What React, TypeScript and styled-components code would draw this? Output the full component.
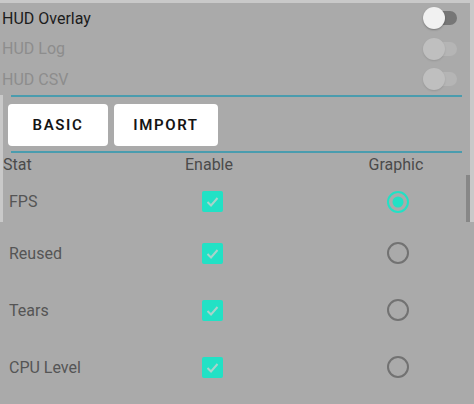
import React from "react";
import styled, { createGlobalStyle } from "styled-components";

const GlobalStyle = createGlobalStyle`
  html, body {
    margin: 0;
    padding: 0;
  }
  body {
    background: #aaaaaa;
    font-family: Roboto, "Noto Sans", sans-serif;
  }
`;

const Screen = styled.div`
  width: 474px;
  height: 404px;
  overflow: hidden;
  background: #aaaaaa;
`;

// the part of the dialog that is still framed by the lighter backdrop
const Sheet = styled.div`
  position: relative;
  height: 222px;
  box-sizing: border-box;
  border-top: 3px solid #c9c9c9;
  border-right: 4px solid #c9c9c9;
  display: flex;
  flex-direction: column;
`;

const Scrollbar = styled.div`
  position: absolute;
  right: 0;
  top: 172px;
  width: 4px;
  height: 47px;
  background: #878787;
`;

const SwitchRow = styled.div`
  height: 30.5px;
  display: flex;
  align-items: center;
  justify-content: space-between;
  padding: 0 13px 0 2px;
`;

const Label = styled.span<{ $muted?: boolean }>`
  font-size: 16px;
  color: ${(p) => (p.$muted ? "#8d8d8d" : "#1c1c1c")};
`;

const SwitchBox = styled.div`
  display: grid;
  grid-template-areas: "s";
  width: 34px;
  height: 22px;
`;

const Track = styled.div<{ $disabled?: boolean }>`
  grid-area: s;
  align-self: center;
  height: 14px;
  border-radius: 7px;
  background: ${(p) => (p.$disabled ? "#b5b5b5" : "#767676")};
`;

const Thumb = styled.div<{ $disabled?: boolean }>`
  grid-area: s;
  justify-self: start;
  width: 22px;
  height: 22px;
  border-radius: 50%;
  background: ${(p) => (p.$disabled ? "#bfbfbf" : "#f1f1f1")};
  box-shadow: 0 1px 2px rgba(0, 0, 0, ${(p) => (p.$disabled ? 0.12 : 0.3)});
`;

const Lower = styled.div`
  flex: 1;
  display: flex;
  flex-direction: column;
  border-left: 3px solid #c9c9c9;
`;

const Divider = styled.div`
  height: 2px;
  margin: 0 8px;
  background: #4a9cae;
`;

const ButtonBar = styled.div`
  display: flex;
  gap: 6px;
  padding: 7px 0 5px 5px;
`;

const TabButton = styled.button<{ $width: number }>`
  width: ${(p) => p.$width}px;
  height: 42px;
  border: none;
  border-radius: 4px;
  background: #ffffff;
  font-family: Roboto, "Noto Sans", sans-serif;
  font-size: 15px;
  font-weight: 600;
  letter-spacing: 1.6px;
  color: #141414;
  padding: 0;
`;

const Grid = styled.div<{ $first: number }>`
  display: grid;
  grid-template-columns: ${(p) => p.$first}px 86px 94px 100px;
  grid-template-areas: "stat enable . graphic";
  align-items: center;
`;

const HeaderRow = styled(Grid)`
  height: 24px;
  font-size: 16px;
  color: #4b4b4b;
`;

const HeadCell = styled.span<{ $area: string; $center?: boolean }>`
  grid-area: ${(p) => p.$area};
  text-align: ${(p) => (p.$center ? "center" : "left")};
`;

const StatRow = styled(Grid)<{ $top?: number; $fill?: boolean }>`
  height: ${(p) => (p.$fill ? "auto" : "57px")};
  flex: ${(p) => (p.$fill ? 1 : "none")};
  box-sizing: border-box;
  padding-top: ${(p) => p.$top || 0}px;
`;

const StatName = styled.span<{ $pad: number }>`
  grid-area: stat;
  padding-left: ${(p) => p.$pad}px;
  font-size: 16px;
  color: #555555;
`;

const CheckCell = styled.div`
  grid-area: enable;
  justify-self: center;
  margin-left: 6px;
  width: 21px;
  height: 21px;
  border-radius: 2px;
  background: #22e1c5;
  display: flex;
`;

const RadioCell = styled.div`
  grid-area: graphic;
  justify-self: center;
  margin-left: 3px;
  width: 22px;
  height: 22px;
  display: flex;
`;

const Rest = styled.div`
  padding-top: 2.5px;
`;

const Check = () => (
  <CheckCell>
    <svg width="21" height="21" viewBox="0 0 21 21">
      <polyline points="5.5,11 9,14.5 15.5,7" fill="none" stroke="#a9d3cb" strokeWidth="2" />
    </svg>
  </CheckCell>
);

const Radio = ({ on }: { on?: boolean }) => (
  <RadioCell>
    <svg width="22" height="22" viewBox="0 0 22 22">
      <circle cx="11" cy="11" r="10" fill="none" stroke={on ? "#22e1c5" : "#727272"} strokeWidth="2" />
      {on && <circle cx="11" cy="11" r="5.5" fill="#22e1c5" />}
    </svg>
  </RadioCell>
);

const Toggle = ({ disabled }: { disabled?: boolean }) => (
  <SwitchBox>
    <Track $disabled={disabled} />
    <Thumb $disabled={disabled} />
  </SwitchBox>
);

const stats = [
  { name: "Reused", graphic: false },
  { name: "Tears", graphic: false },
  { name: "CPU Level", graphic: false },
];

export default function App() {
  return (
    <Screen>
      <GlobalStyle />
      <Sheet>
        <SwitchRow>
          <Label>HUD Overlay</Label>
          <Toggle />
        </SwitchRow>
        <SwitchRow>
          <Label $muted>HUD Log</Label>
          <Toggle disabled />
        </SwitchRow>
        <SwitchRow>
          <Label $muted>HUD CSV</Label>
          <Toggle disabled />
        </SwitchRow>
        <Lower>
          <Divider />
          <ButtonBar>
            <TabButton $width={100}>BASIC</TabButton>
            <TabButton $width={104}>IMPORT</TabButton>
          </ButtonBar>
          <Divider />
          <HeaderRow $first={163}>
            <HeadCell $area="stat">Stat</HeadCell>
            <HeadCell $area="enable" $center>
              Enable
            </HeadCell>
            <HeadCell $area="graphic" $center>
              Graphic
            </HeadCell>
          </HeaderRow>
          <StatRow $first={163} $top={5} $fill>
            <StatName $pad={6}>FPS</StatName>
            <Check />
            <Radio on />
          </StatRow>
        </Lower>
        <Scrollbar />
      </Sheet>
      <Rest>
        {stats.map((s) => (
          <StatRow key={s.name} $first={166}>
            <StatName $pad={9}>{s.name}</StatName>
            <Check />
            <Radio on={s.graphic} />
          </StatRow>
        ))}
      </Rest>
    </Screen>
  );
}
